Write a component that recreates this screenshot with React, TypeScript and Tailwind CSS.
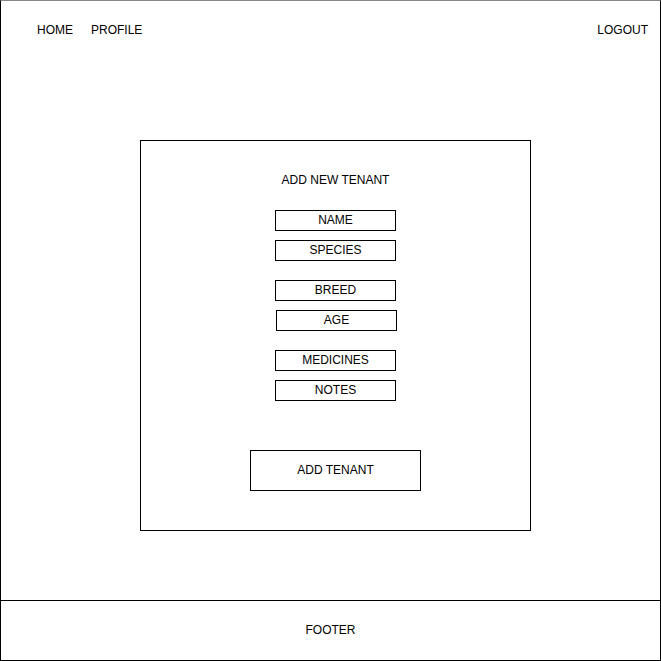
export default function App() {
  const font = { fontFamily: '"Liberation Sans", Arial, sans-serif' };
  const Field = ({ label, className = "" }: { label: string; className?: string }) => (
    <div className={`w-[121px] h-[21px] border border-black flex items-center justify-center pb-[2px] text-[12px] leading-[14px] ${className}`}>
      {label}
    </div>
  );
  return (
    <div style={font} className="w-[661px] h-[661px] border border-black border-t-[#888888] flex flex-col text-black bg-white">
      <header className="flex items-center pt-[22px] pl-[36px] pr-[12px] text-[12px] leading-[14px]">
        <span>HOME</span>
        <span className="ml-[18px]">PROFILE</span>
        <span className="ml-auto">LOGOUT</span>
      </header>
      <main className="flex-1">
        <div className="ml-[139px] mt-[103px] w-[391px] h-[391px] border border-black flex flex-col items-center">
          <div className="mt-[32px] text-[12px] leading-[14px]">ADD NEW TENANT</div>
          <Field label="NAME" className="mt-[23px]" />
          <Field label="SPECIES" className="mt-[9px]" />
          <Field label="BREED" className="mt-[19px]" />
          <Field label="AGE" className="mt-[9px] ml-[2px]" />
          <Field label="MEDICINES" className="mt-[19px]" />
          <Field label="NOTES" className="mt-[9px]" />
          <button className="mt-[49px] w-[171px] h-[41px] border border-black flex items-center justify-center pb-[2px] text-[12px] leading-[14px]">
            ADD TENANT
          </button>
        </div>
      </main>
      <footer className="h-[60px] border-t border-black flex items-center justify-center pb-[2px] text-[12px] leading-[14px]">
        FOOTER
      </footer>
    </div>
  );
}
